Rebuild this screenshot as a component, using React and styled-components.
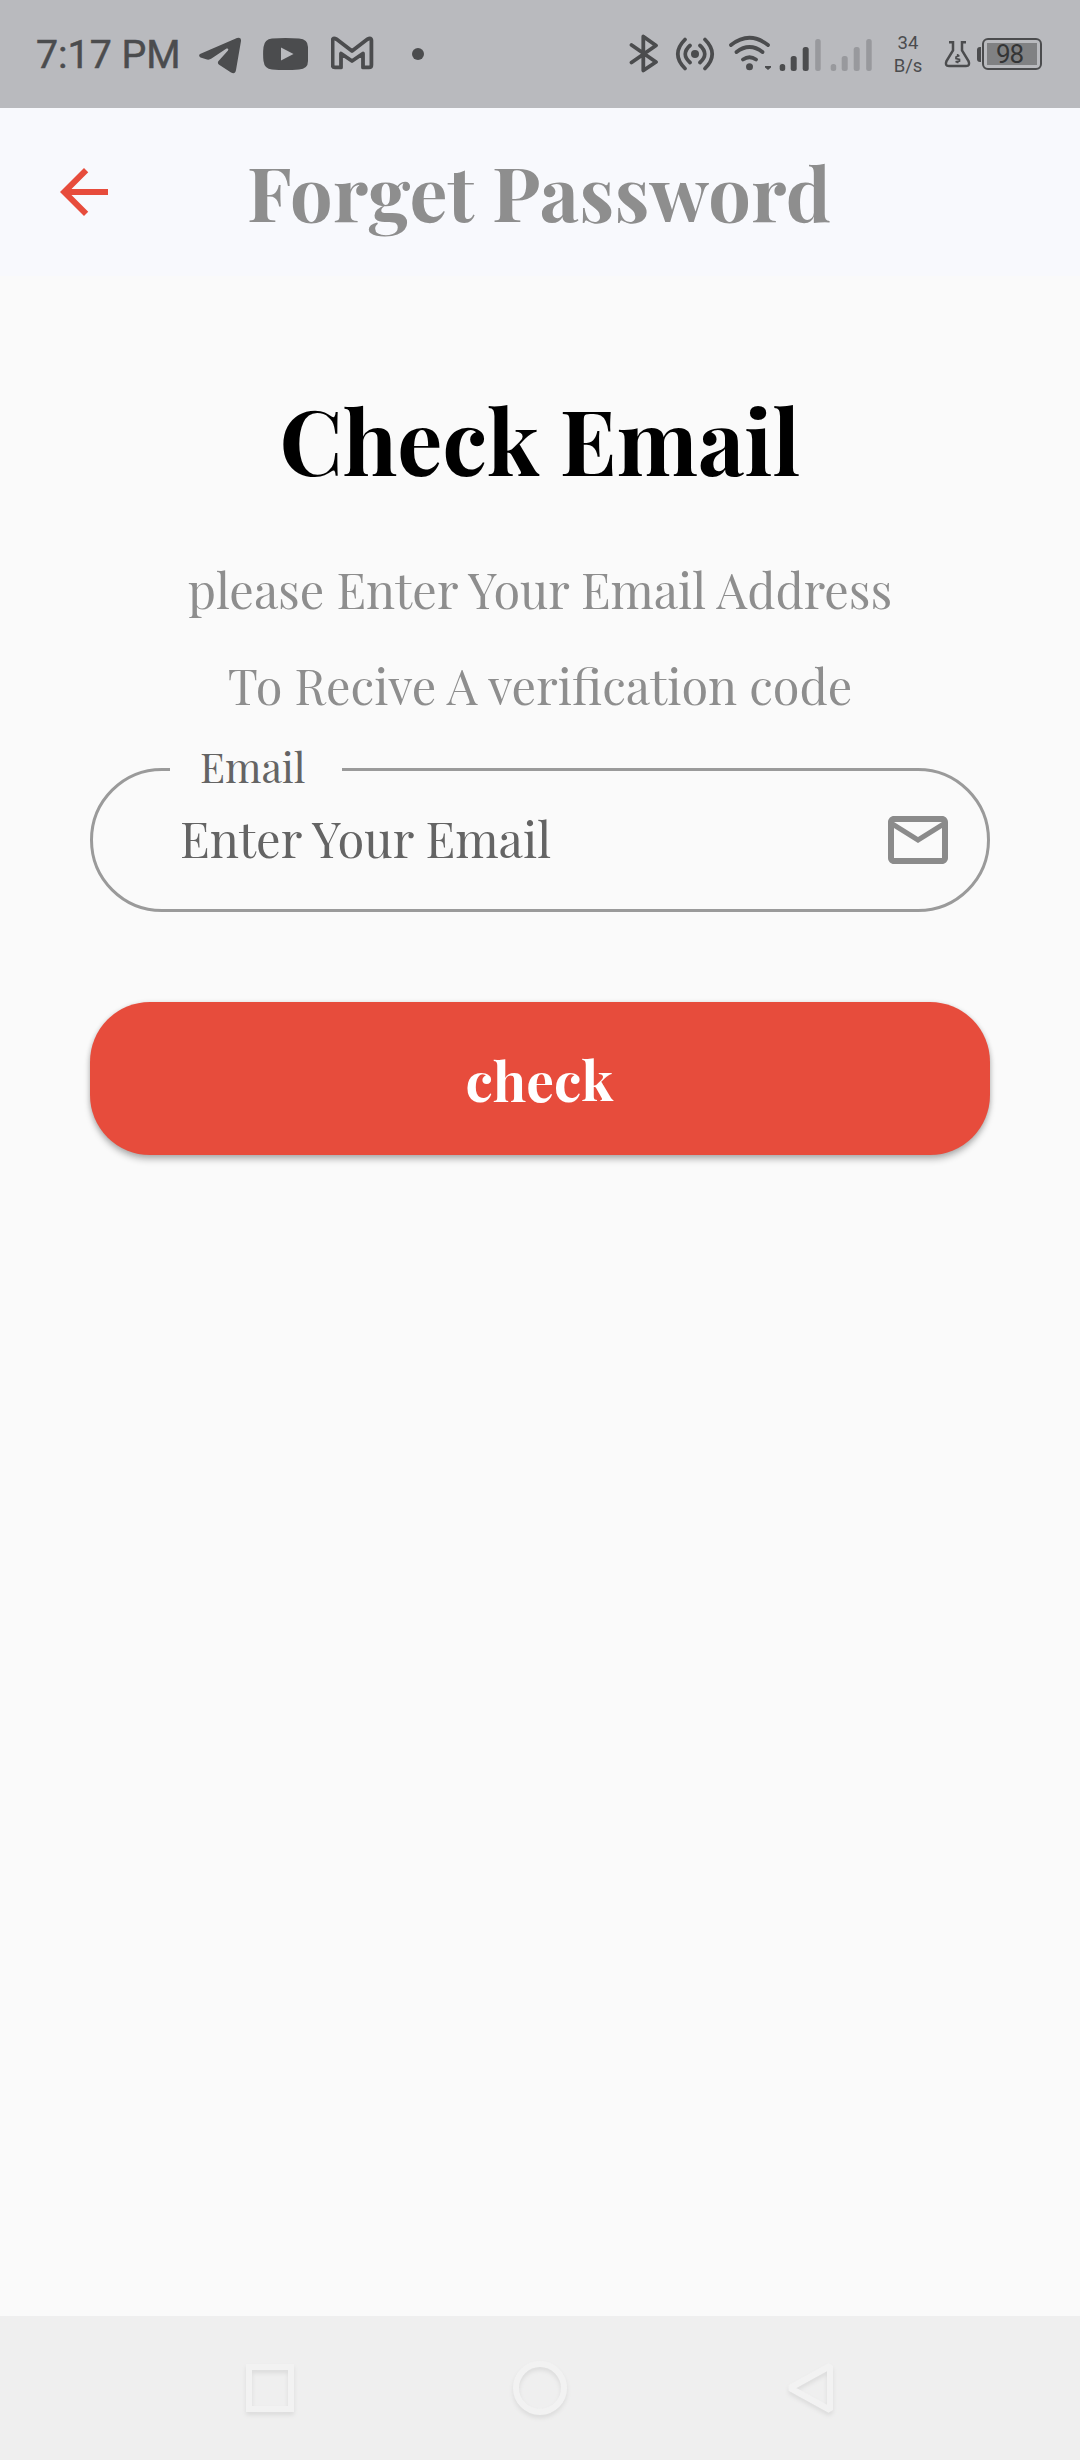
import React from "react";
import styled, { createGlobalStyle } from "styled-components";

const ink = "#4b4c4e";
const accent = "#e74c3c";
const serif = '"Playfair Display", "Liberation Serif", serif';

const GlobalStyle = createGlobalStyle`
  * { box-sizing: border-box; }
  body { margin: 0; background: #fafafa; }
`;

const Screen = styled.div`
  width: 1080px;
  height: 2460px;
  display: flex;
  flex-direction: column;
  background: #fafafa;
  font-family: ${serif};
`;

const StatusBar = styled.header`
  height: 108px;
  flex: none;
  display: flex;
  align-items: center;
  justify-content: space-between;
  padding: 0 38px 0 36px;
  background: #b9babe;
  color: ${ink};
  font-family: Roboto, sans-serif;
`;

const StatusGroup = styled.div`
  display: flex;
  align-items: center;
`;

const Clock = styled.span`
  width: 163px;
  padding-top: 2px;
  font-size: 39.3px;
  font-weight: 400;
  line-height: 48px;
  white-space: nowrap;
  -webkit-text-stroke: 0.5px ${ink};
`;

const Glyph = styled.svg`
  display: block;
  flex: none;
  height: 108px;
`;

const Speed = styled.div`
  width: 40px;
  margin: 0 3px 0 13px;
  padding-top: 1px;
  font-size: 18.5px;
  line-height: 23px;
  text-align: center;
`;

const Battery = styled.div`
  display: flex;
  align-items: center;
`;

const BatteryNub = styled.div`
  width: 4px;
  height: 15px;
  margin-right: 1px;
  border-radius: 3px 0 0 3px;
  background: ${ink};
`;

const BatteryShell = styled.div`
  width: 60px;
  height: 32px;
  padding: 3px;
  border: 2.5px solid ${ink};
  border-radius: 6px;
`;

const BatteryLevel = styled.div`
  height: 100%;
  display: flex;
  align-items: center;
  justify-content: center;
  padding-right: 5px;
  background: #808183;
  color: #343536;
  font-size: 26px;
  font-weight: 400;
  line-height: 22px;
  letter-spacing: -1px;
`;

const AppBar = styled.div`
  height: 168px;
  flex: none;
  display: grid;
  grid-template-columns: 168px 1fr 168px;
  align-items: center;
  background: #f8f9fd;
`;

const BackButton = styled.button`
  width: 72px;
  height: 72px;
  margin-left: 48px;
  padding: 0;
  border: 0;
  background: none;
  color: ${accent};
`;

const AppTitle = styled.h1`
  margin: 0 1px 0 -1px;
  padding-bottom: 2px;
  color: #8e8e8e;
  font-size: 75.5px;
  font-weight: 700;
  line-height: 100px;
  letter-spacing: 0.3px;
  text-align: center;
  white-space: nowrap;
`;

const Content = styled.main`
  flex: 1;
  display: flex;
  flex-direction: column;
  padding: 103px 90px 0;
`;

const Heading = styled.h2`
  margin: 0 0 42px;
  color: #000;
  font-size: 89.7px;
  font-weight: 700;
  line-height: 120px;
  text-align: center;
`;

const Hint = styled.p`
  margin: 0;
  color: #8e8e8e;
  font-size: 48.6px;
  line-height: 96px;
  text-align: center;
  white-space: nowrap;
`;

const Field = styled.fieldset`
  display: flex;
  min-width: 0;
  height: 163px;
  margin: 16px 0 0;
  padding: 0;
  border: 3px solid #9a9a9a;
  border-radius: 72px;
`;

const Label = styled.legend`
  width: 172px;
  height: 41px;
  margin-left: 77px;
  padding: 0 0 0 30px;
  color: #646464;
  font-size: 41px;
  line-height: 34px;
`;

const FieldBody = styled.div`
  width: 100%;
  height: 100px;
  display: flex;
  align-items: center;
  justify-content: space-between;
  padding: 0 33px 0 87px;
`;

const Input = styled.input`
  width: 600px;
  height: 80px;
  padding: 0 0 6px;
  border: 0;
  outline: 0;
  background: none;
  font-family: ${serif};
  font-size: 48.8px;
  &::placeholder { color: #646464; opacity: 1; }
`;

const SubmitButton = styled.button`
  height: 153px;
  margin-top: 90px;
  padding: 0 1px 0 0;
  border: 0;
  border-radius: 60px;
  background: ${accent};
  box-shadow: 0 5px 6px rgba(0, 0, 0, 0.22), 0 1px 5px rgba(0, 0, 0, 0.16);
  color: #fff;
  font-family: ${serif};
  font-size: 55px;
  font-weight: 700;
`;

const NavBar = styled.nav`
  height: 144px;
  flex: none;
  display: flex;
  align-items: center;
  justify-content: space-between;
  padding: 0 234px;
  background: #efefef;
`;

const NavIcon = styled.svg`
  width: 72px;
  height: 72px;
  overflow: visible;
  fill: none;
  stroke: #f2f2f2;
  stroke-width: 6;
  filter: drop-shadow(0 3px 2px rgba(0, 0, 0, 0.08));
`;

function StatusIcon({ x, width, children }) {
  return (
    <Glyph width={width} viewBox={`${x} 0 ${width} 108`} fill={ink} stroke="none">
      {children}
    </Glyph>
  );
}

const bars = [
  { dx: 0, y: 64, w: 5.5 },
  { dx: 11, y: 56, w: 6 },
  { dx: 23, y: 47, w: 6 },
  { dx: 35.5, y: 39, w: 5.5 },
];

function Signal({ x, level }) {
  return bars.map((b, i) => (
    <rect
      key={b.dx}
      x={x + b.dx}
      y={b.y}
      width={b.w}
      height={71 - b.y}
      rx="2.5"
      fill={i < level ? ink : "#98999d"}
    />
  ));
}

export default function App() {
  return (
    <Screen>
      <GlobalStyle />
      <StatusBar>
        <StatusGroup>
          <Clock>7:17 PM</Clock>
          <StatusIcon x={199} width={64}>
            <path d="M200 54 L237 38 Q241.500 36.500 241 41 L236 70 Q235 75 231 72.500 L219.500 65 Q216.500 63 219 60.500 L228 50.500 Q229 48 226.500 48.500 L211.500 58.500 Q209.500 60 207 59.500 L200.500 57.500 Q198 55.500 200 54 Z" />
          </StatusIcon>
          <StatusIcon x={263} width={68}>
            <path
              fillRule="evenodd"
              d="M272 38.500 Q285.500 37.500 299 38.500 Q308 39 308 47 V61 Q308 69 299 69.500 Q285.500 70.500 272 69.500 Q264.500 69 263.500 61 Q262.700 54 263.500 47 Q264.500 39 272 38.500 Z M281 47.500 V60.500 L293.500 54 Z"
            />
          </StatusIcon>
          <StatusIcon x={331} width={78}>
            <path
              d="M332.600 41.500 Q332.300 38 335 38.500 L337 39.500 L352 51 L367 39.500 L369 38.500 Q371.700 38 371.400 41.500 V65 Q371.400 67.400 369 67.400 H363 V53.500 L352 61 L341 53.500 V67.400 H335 Q332.600 67.400 332.600 65 Z"
              fill="none"
              stroke={ink}
              strokeWidth="3.800"
              strokeLinejoin="round"
            />
          </StatusIcon>
          <StatusIcon x={409} width={20}>
            <circle cx="418" cy="54" r="6" />
          </StatusIcon>
        </StatusGroup>

        <StatusGroup>
          <StatusIcon x={629} width={46}>
            <path
              d="M631.500 45 L656 62 L643.300 70.500 V36.500 L656 45.500 L631.500 62.500"
              fill="none"
              stroke={ink}
              strokeWidth="3.800"
              strokeLinecap="round"
              strokeLinejoin="round"
            />
          </StatusIcon>
          <StatusIcon x={675} width={53}>
            <circle cx="695" cy="54" r="4" />
            <path
              d="M690 45.500 Q680.500 54 690 62.500 M700 45.500 Q709.500 54 700 62.500 M685 39.500 Q670.500 54 685 68.500 M705 39.500 Q719.500 54 705 68.500"
              fill="none"
              stroke={ink}
              strokeWidth="3.700"
              strokeLinecap="round"
            />
          </StatusIcon>
          <StatusIcon x={728} width={51}>
            <circle cx="749.500" cy="66.700" r="3.500" />
            <path
              d="M731 45 Q749.500 30.500 768 45 M736.500 52 Q749.500 42 762.500 52 M743 59.500 Q749.500 55 756 59.500"
              fill="none"
              stroke={ink}
              strokeWidth="3.800"
              strokeLinecap="round"
            />
            <path d="M765 66 H771 V67.500 L768 70 L765 67.500 Z" />
          </StatusIcon>
          <StatusIcon x={779} width={96}>
            <Signal x={779.7} level={3} />
            <Signal x={830.7} level={0} />
          </StatusIcon>
          <Speed>
            <div>34</div>
            <div>B/s</div>
          </Speed>
          <StatusIcon x={931} width={46}>
            <path
              d="M949 42.300 H953 V50.500 L946.500 61 Q944.500 66 949 66 H966 Q970.500 66 968.500 61 L962 50.500 V42.300 H966"
              fill="none"
              stroke={ink}
              strokeWidth="2.500"
            />
            <path
              d="M959.500 55.500 L956 57 V58.500 L959.500 59.500 V61 L955.500 61.800 M957.700 54 V56 M957.700 61 V63.200"
              fill="none"
              stroke={ink}
              strokeWidth="1.700"
            />
          </StatusIcon>
          <Battery>
            <BatteryNub />
            <BatteryShell>
              <BatteryLevel>98</BatteryLevel>
            </BatteryShell>
          </Battery>
        </StatusGroup>
      </StatusBar>

      <AppBar>
        <BackButton aria-label="Back">
          <svg width="72" height="72" viewBox="0 0 24 24" fill="currentColor" display="block">
            <path d="M20 11H7.830l5.590-5.590L12 4l-8 8 8 8 1.410-1.410L7.830 13H20v-2z" />
          </svg>
        </BackButton>
        <AppTitle>Forget Password</AppTitle>
      </AppBar>

      <Content>
        <Heading>Check Email</Heading>
        <Hint>please Enter Your Email Address</Hint>
        <Hint>To Recive A verification code</Hint>
        <Field>
          <Label>Email</Label>
          <FieldBody>
            <Input placeholder="Enter Your Email" />
            <svg width="72" height="72" viewBox="0 0 24 24" fill="#8b8b8b">
              <path d="M20 4H4c-1.100 0-2 .9-2 2v12c0 1.100.9 2 2 2h16c1.100 0 2-.9 2-2V6c0-1.100-.9-2-2-2zm0 14H4V8l8 5 8-5v10zm-8-7L4 6h16l-8 5z" />
            </svg>
          </FieldBody>
        </Field>
        <SubmitButton>check</SubmitButton>
      </Content>

      <NavBar>
        <NavIcon viewBox="0 0 72 72">
          <rect x="15" y="15" width="42" height="42" />
        </NavIcon>
        <NavIcon viewBox="0 0 72 72">
          <circle cx="36" cy="36" r="24" />
        </NavIcon>
        <NavIcon viewBox="0 0 72 72">
          <path d="M56 14 L16 36 L56 58 Z" strokeLinejoin="bevel" />
        </NavIcon>
      </NavBar>
    </Screen>
  );
}
